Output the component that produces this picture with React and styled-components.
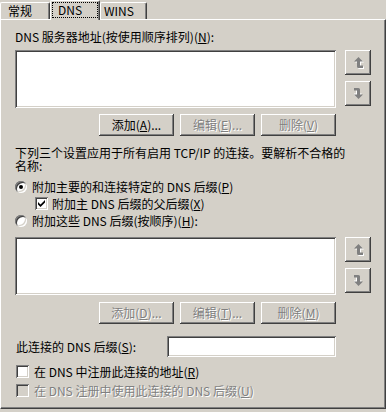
import styled, { createGlobalStyle } from "styled-components";

const GlobalStyle = createGlobalStyle`
  html, body { margin: 0; padding: 0; background: #d4d0c8; }
  body {
    font-family: "Noto Sans CJK SC", "Liberation Sans", sans-serif;
    font-size: 12px;
    color: #000;
  }
`;

const UpArrow = ({ flip }) => (
  <svg width="10" height="12" viewBox="0 0 10 12">
    <g transform={flip ? "rotate(180 4.5 5.5)" : undefined}>
      <path transform="translate(1 1)" d="M4.5 0 L9 4.5 H6 V8.5 H9 V11 H4.5 Q3 11 3 9.5 V4.5 H0 Z" fill="#fff" />
      <path d="M4.5 0 L9 4.5 H6 V8.5 H9 V11 H4.5 Q3 11 3 9.5 V4.5 H0 Z" fill="#808080" />
    </g>
  </svg>
);

const App = () => {
  return (
    <>
      <GlobalStyle />
      <Window>
        <TabStrip>
          <Tab $w={50} $pl={7}>常规</Tab>
          <Tab $w={50} $active>
            <FocusRing>DNS</FocusRing>
          </Tab>
          <Tab $w={47} $pl={3}>WINS</Tab>
        </TabStrip>

        <Panel>
          <Label>
            DNS 服务器地址(按使用顺序排列)(<u>N</u>):
          </Label>
          <ListRow $mt={7}>
            <ListBox />
            <ArrowCol>
              <ArrowButton disabled>
                <UpArrow />
              </ArrowButton>
              <ArrowButton disabled>
                <UpArrow flip />
              </ArrowButton>
            </ArrowCol>
          </ListRow>
          <ButtonRow>
            <PushButton>
              添加(<u>A</u>)...
            </PushButton>
            <PushButton disabled>
              编辑(<u>E</u>)...
            </PushButton>
            <PushButton disabled>
              删除(<u>V</u>)
            </PushButton>
          </ButtonRow>

          <Desc>
            <DescLine>下列三个设置应用于所有启用 TCP/IP 的连接。要解析不合格的</DescLine>
            <DescLine>名称:</DescLine>
          </Desc>

          <OptionRow $mt={8}>
            <Radio $checked />
            <span>
              附加主要的和连接特定的 DNS 后缀(<u>P</u>)
            </span>
          </OptionRow>
          <OptionRow $mt={4} $indent={20} $gap={4}>
            <CheckBox>
              <svg width="7" height="7" viewBox="0 0 7 7">
                <path d="M0 2 L0 4.5 L2.5 7 L7 2.5 L7 0 L2.5 4.5 Z" fill="#000" />
              </svg>
            </CheckBox>
            <span>
              附加主 DNS 后缀的父后缀(<u>X</u>)
            </span>
          </OptionRow>
          <OptionRow $mt={4}>
            <Radio />
            <span>
              附加这些 DNS 后缀(按顺序)(<u>H</u>):
            </span>
          </OptionRow>

          <ListRow $mt={10}>
            <ListBox />
            <ArrowCol>
              <ArrowButton disabled>
                <UpArrow />
              </ArrowButton>
              <ArrowButton disabled>
                <UpArrow flip />
              </ArrowButton>
            </ArrowCol>
          </ListRow>
          <ButtonRow $mt={7}>
            <PushButton disabled>
              添加(<u>D</u>)...
            </PushButton>
            <PushButton disabled>
              编辑(<u>T</u>)...
            </PushButton>
            <PushButton disabled>
              删除(<u>M</u>)
            </PushButton>
          </ButtonRow>

          <SuffixRow>
            <SuffixLabel>
              此连接的 DNS 后缀(<u>S</u>):
            </SuffixLabel>
            <TextField />
          </SuffixRow>

          <OptionRow $mt={8} $indent={1} $gap={5}>
            <CheckBox />
            <span>
              在 DNS 中注册此连接的地址(<u>R</u>)
            </span>
          </OptionRow>
          <OptionRow $mt={6} $indent={1} $gap={5}>
            <CheckBox $disabled />
            <Dim>
              在 DNS 注册中使用此连接的 DNS 后缀(<u>U</u>)
            </Dim>
          </OptionRow>
        </Panel>
      </Window>
    </>
  );
};

export default App;

// window + tabs
const Window = styled.div`
  width: 386px;
  height: 412px;
  display: flex;
  flex-direction: column;
  background: #d4d0c8;
  overflow: hidden;
`;

const TabStrip = styled.div`
  display: flex;
  align-items: flex-end;
  height: 19px;
  flex: none;
  position: relative;
  z-index: 1;
`;

const Tab = styled.div`
  box-sizing: border-box;
  width: ${(p) => p.$w}px;
  height: ${(p) => (p.$active ? 20 : 17)}px;
  margin-bottom: ${(p) => (p.$active ? -1 : 0)}px;
  padding: ${(p) => (p.$active ? "1px 1px 0 1px" : `1px 0 0 ${p.$pl}px`)};
  border-top: 1px solid #fff;
  border-left: 1px solid #fff;
  border-right: 1px solid #404040;
  border-radius: 2px 2px 0 0;
  box-shadow: inset -1px 0 #808080;
  background: #d4d0c8;
  line-height: 14px;
  white-space: nowrap;
`;

const FocusRing = styled.span`
  display: block;
  box-sizing: border-box;
  height: 16px;
  border: 1px dotted #000;
  padding-left: 5px;
  line-height: 14px;
`;

//panel
const Panel = styled.div`
  flex: 1;
  margin-bottom: 3px;
  box-sizing: border-box;
  border-top: 1px solid #fff;
  border-left: 1px solid #fff;
  border-right: 1px solid #404040;
  border-bottom: 1px solid #404040;
  box-shadow: inset -1px -1px #808080;
  padding: 10px 0 0 14px;
  display: flex;
  flex-direction: column;
`;

const Label = styled.div`
  line-height: 13px;
  white-space: nowrap;
`;

const Desc = styled.div`
  margin-top: 10px;
  display: flex;
  flex-direction: column;
`;

const DescLine = styled.div`
  line-height: 13px;
  height: 13px;
  white-space: nowrap;
`;

// lists
const ListRow = styled.div`
  display: flex;
  gap: 9px;
  margin-top: ${(p) => p.$mt}px;
`;

const ListBox = styled.div`
  width: 321px;
  height: 58px;
  background: #fff;
  box-shadow: inset 1px 1px #808080, inset -1px -1px #fff, inset 2px 2px #404040,
    inset -2px -2px #d4d0c8;
`;

const ArrowCol = styled.div`
  display: flex;
  flex-direction: column;
  gap: 6px;
`;

const raised = `
  background: #d4d0c8;
  border: none;
  box-shadow: inset -1px -1px #404040, inset 1px 1px #fff, inset -2px -2px #808080,
    inset 2px 2px #d4d0c8;
`;

const ArrowButton = styled.button`
  ${raised}
  width: 26px;
  height: 25px;
  padding: 0 0 0 1px;
  display: flex;
  align-items: center;
  justify-content: center;
`;

// buttons
const ButtonRow = styled.div`
  width: 321px;
  display: flex;
  justify-content: flex-end;
  gap: 6px;
  margin-top: ${(p) => p.$mt || 6}px;
`;

const PushButton = styled.button`
  ${raised}
  width: 75px;
  height: 22px;
  padding: 0;
  font: inherit;
  line-height: 20px;
  color: ${(p) => (p.disabled ? "#808080" : "#000")};
  text-shadow: ${(p) => (p.disabled ? "1px 1px #fff" : "none")};
`;

// radios, checks
const OptionRow = styled.div`
  display: flex;
  align-items: center;
  gap: ${(p) => p.$gap || 5}px;
  height: 13px;
  line-height: 13px;
  margin-top: ${(p) => p.$mt}px;
  padding-left: ${(p) => p.$indent || 0}px;
  white-space: nowrap;
`;

const Radio = styled.span`
  flex: none;
  width: 12px;
  height: 12px;
  border-radius: 50%;
  background: #fff;
  box-shadow: inset 1px 1px #808080, inset -1px -1px #fff, inset 2px 2px #404040,
    inset -2px -2px #d4d0c8;
  display: flex;
  align-items: center;
  justify-content: center;
  &::after {
    content: "";
    display: ${(p) => (p.$checked ? "block" : "none")};
    width: 4px;
    height: 4px;
    border-radius: 50%;
    background: #000;
  }
`;

const CheckBox = styled.span`
  flex: none;
  width: 13px;
  height: 13px;
  box-sizing: border-box;
  background: ${(p) => (p.$disabled ? "#d4d0c8" : "#fff")};
  box-shadow: inset 1px 1px #808080, inset -1px -1px #fff, inset 2px 2px #404040,
    inset -2px -2px #d4d0c8;
  display: flex;
  align-items: center;
  justify-content: center;
`;

const Dim = styled.span`
  color: #808080;
  text-shadow: 1px 1px #fff;
`;

// suffix field
const SuffixRow = styled.div`
  display: flex;
  align-items: center;
  margin-top: 12px;
`;

const SuffixLabel = styled.span`
  width: 151px;
  padding-left: 1px;
  white-space: nowrap;
`;

const TextField = styled.div`
  width: 169px;
  height: 21px;
  background: #fff;
  box-shadow: inset 1px 1px #808080, inset -1px -1px #fff, inset 2px 2px #404040,
    inset -2px -2px #d4d0c8;
`;
